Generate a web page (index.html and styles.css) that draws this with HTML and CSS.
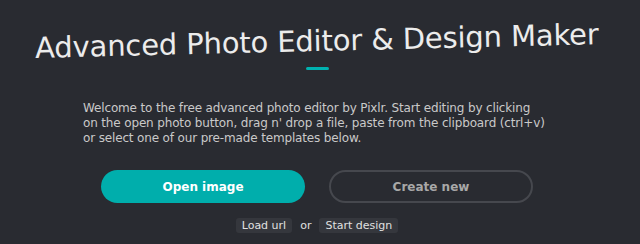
FILE: index.html
```html
<!DOCTYPE html>
<html lang="en">
<head>
    <meta charset="UTF-8">
    <meta name="viewport" content="width=device-width, initial-scale=1.0">
    <title>Pixlr - Advanced Photo Editor</title>
    <link rel="stylesheet" href="styles.css">
</head>
<body>
    <div class="home">
        <h1 class="home-title">Advanced Photo Editor &amp; Design Maker</h1>
        <div class="home-line"></div>

        <p class="home-intro">Welcome to the free advanced photo editor by Pixlr. Start editing by clicking<br>
            on the open photo button, drag n' drop a file, paste from the clipboard (ctrl+v)<br>
            or select one of our pre-made templates below.</p>

        <div class="home-buttons">
            <button class="btn btn-open">Open image</button>
            <button class="btn btn-create">Create new</button>
        </div>

        <div class="home-links">
            <a class="chip" href="#">Load url</a>
            <span class="or">or</span>
            <a class="chip" href="#">Start design</a>
        </div>
    </div>
</body>
</html>
```

FILE: styles.css
```css
body {
    margin: 0;
    background-color: #292b31;
    font-family: 'DejaVu Sans', 'Open Sans', sans-serif;
    color: #d0d0d0;
    overflow: hidden;
}

.home {
    display: flex;
    flex-direction: column;
    align-items: center;
    padding-top: 24px;
    padding-right: 6px;
}

.home-title {
    margin: 0;
    font-weight: 400;
    font-size: 29px;
    line-height: 34px;
    color: #ececec;
    white-space: nowrap;
    letter-spacing: -0.15px;
    transform: rotate(-1.4deg);
}

.home-line {
    width: 23px;
    height: 3px;
    margin-top: 9px;
    border-radius: 2px;
    background-color: #00b2b0;
}

.home-intro {
    width: 466px;
    margin: 31px 0 0 -2px;
    font-size: 12px;
    line-height: 15px;
    letter-spacing: -0.15px;
    white-space: nowrap;
    color: #c9c9c9;
}

.home-buttons {
    display: flex;
    gap: 24px;
    margin-top: 24px;
}

.btn {
    width: 204px;
    height: 33px;
    border-radius: 17px;
    font-family: inherit;
    font-size: 12px;
    font-weight: bold;
    cursor: pointer;
}

.btn-open {
    background-color: #00aeac;
    color: #ffffff;
    border: none;
}

.btn-create {
    background-color: transparent;
    color: #a8a8a8;
    border: 2px solid #46484e;
}

.home-links {
    display: flex;
    align-items: center;
    gap: 8px;
    margin-top: 15px;
}

.chip {
    padding: 0 6px;
    height: 15px;
    line-height: 15px;
    background-color: #35373d;
    border-radius: 3px;
    color: #e0e0e0;
    font-size: 11px;
    text-decoration: none;
}

.or {
    font-size: 11px;
    color: #e0e0e0;
}
```
